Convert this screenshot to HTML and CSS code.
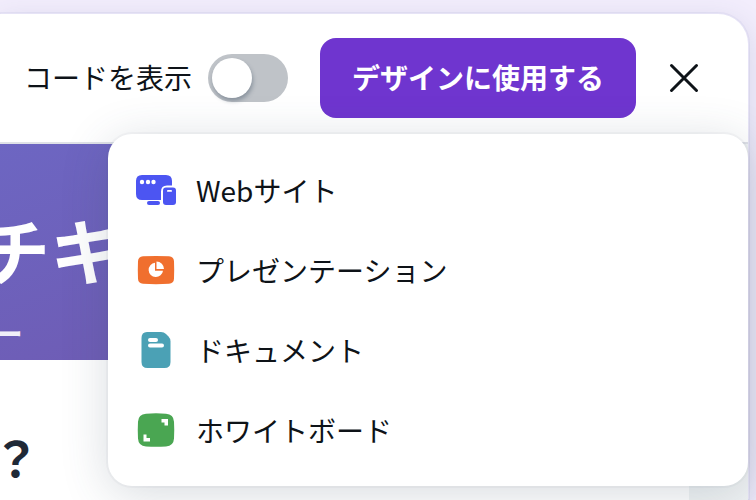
FILE: index.html
```html
<!DOCTYPE html>
<html lang="ja">
<head>
  <meta charset="UTF-8">
  <meta name="viewport" content="width=device-width, initial-scale=1.0">
  <title>デザインに使用する</title>
  <link rel="stylesheet" href="styles.css">
</head>
<body>
  <div class="dialog">
    <header class="toolbar">
      <label class="code-label" for="showCode">コードを表示</label>
      <input class="switch" type="checkbox" role="switch" id="showCode">
      <button class="use-btn" type="button" id="useBtn" aria-expanded="true" aria-controls="useMenu">デザインに使用する</button>
      <button class="close-btn" type="button" aria-label="閉じる">
        <svg width="32" height="32" viewBox="0 0 32 32" fill="none" stroke="currentColor" stroke-width="3" stroke-linecap="round">
          <path d="M3.5 3.5l25 25M28.5 3.5l-25 25"/>
        </svg>
      </button>

      <div class="menu" id="useMenu">
        <button class="menu-item" type="button">
          <svg class="menu-icon" viewBox="0 0 48 48">
            <path fill="#4c55f2" d="M10 9h24q6 0 6 6v4.500h-5q-6 0-6 6V34H10q-6 0-6-6V15q0-6 6-6z"/>
            <rect x="15" y="35" width="13" height="4" rx="2" fill="#4c55f2"/>
            <rect x="31" y="21.500" width="13" height="17.500" rx="3" fill="#4c55f2"/>
            <g fill="#fff">
              <circle cx="10" cy="16" r="2.200"/>
              <circle cx="16" cy="16" r="2.200"/>
              <circle cx="21.500" cy="16" r="2.200"/>
              <rect x="35" y="24" width="5" height="1.800" rx=".9"/>
            </g>
          </svg>
          Webサイト
        </button>
        <button class="menu-item" type="button">
          <svg class="menu-icon" viewBox="0 0 48 48">
            <path fill="#f06f2e" d="M11 10.300q13-.8 26 0 4.800.3 5 5 .4 8.700 0 17.500-.2 4.700-5 5-13 .8-26 0-4.800-.3-5-5-.4-8.800 0-17.500.2-4.700 5-5z"/>
            <path fill="#fff" d="M23 16.700v8h8a7.200 7.200 0 1 1-8-8z"/>
            <path fill="#fff" d="M24.500 15.500a7.500 7.500 0 0 1 7.500 7.500h-7.500z"/>
          </svg>
          プレゼンテーション
        </button>
        <button class="menu-item" type="button">
          <svg class="menu-icon" viewBox="0 0 48 48">
            <path fill="#4ba1b5" d="M15 6h14q3 0 5 2l2.500 2.500q2 2 2 5V36q0 6-6 6h-17q-6 0-6-6V12q0-6 5.500-6z"/>
            <rect x="16" y="12" width="10" height="4" rx="2" fill="#fff"/>
            <rect x="16" y="17.500" width="16" height="4" rx="2" fill="#fff"/>
          </svg>
          ドキュメント
        </button>
        <button class="menu-item" type="button">
          <svg class="menu-icon" viewBox="0 0 48 48">
            <path fill="#4aa652" d="M14 7.700q10-.9 20 0 7.600.4 8 8 .5 8.300 0 16.700-.4 7.400-8 8-10 .8-20 0-7.600-.6-8-8-.5-8.400 0-16.700.4-7.600 8-8z"/>
            <path fill="#fff" d="M29.500 13H36v6.500h-3.500v-3h-3zM11.500 28.500h3v3.500h3.500v3.500h-6.500z"/>
          </svg>
          ホワイトボード
        </button>
      </div>
    </header>

    <main class="preview">
      <article class="page">
        <section class="hero">
          <h1>チキ</h1>
          <p>ー</p>
        </section>
        <h2>？</h2>
      </article>
    </main>
  </div>
</body>
</html>
```

FILE: styles.css
```css
* {
  box-sizing: border-box;
}

body {
  margin: 0;
  min-height: 100vh;
  padding: 12px 6px 0 0;
  display: flex;
  background: #f2edfc;
  color: #0e1318;
  font-family: "Noto Sans CJK JP", sans-serif;
  font-size: 28px;
  line-height: 40px;
  overflow: hidden;
}

button {
  border: none;
  padding: 0;
  background: none;
  color: inherit;
  font: inherit;
  cursor: pointer;
}

.dialog {
  flex: 1;
  min-width: 0;
  display: flex;
  flex-direction: column;
  background: #fff;
  background-clip: padding-box;
  border: 2px solid rgba(57, 76, 148, 0.06);
  border-left: none;
  border-bottom: none;
  border-radius: 0 32px 0 0;
  box-shadow: 0 8px 28px rgba(64, 79, 129, 0.15);
}

.toolbar {
  position: relative;
  display: flex;
  align-items: center;
  justify-content: flex-end;
  padding: 24px 40px 24px 0;
  border-bottom: 2px solid #dfe1e7;
}

.code-label {
  white-space: nowrap;
  margin-right: 16px;
  padding-bottom: 2px;
}

.switch {
  appearance: none;
  flex: none;
  width: 80px;
  height: 48px;
  margin: 0 32px 0 0;
  padding: 4px;
  border-radius: 24px;
  background: #bfc3c8;
  cursor: pointer;
}

.switch::before {
  content: "";
  display: block;
  width: 40px;
  height: 40px;
  border-radius: 50%;
  background: #fff;
  box-shadow: 1px 3px 4px rgba(57, 76, 96, 0.4);
}

.switch:checked {
  background: #6f35cf;
}

.switch:checked::before {
  margin-left: auto;
}

.use-btn {
  height: 80px;
  padding: 0 32px 2px;
  border-radius: 16px;
  background: #6f35cf;
  color: #fff;
  font-weight: 700;
  white-space: nowrap;
}

.close-btn {
  display: flex;
  align-items: center;
  justify-content: center;
  width: 48px;
  height: 48px;
  margin-left: 24px;
}

.menu {
  position: absolute;
  z-index: 1;
  top: 120px;
  right: 0;
  width: 640px;
  max-width: 100%;
  padding: 16px 0;
  border-radius: 24px;
  background: #fff;
  box-shadow: 0 0 0 2px rgba(64, 87, 109, 0.04), 0 8px 48px rgba(57, 76, 96, 0.2);
}

.menu-item {
  display: flex;
  align-items: center;
  gap: 16px;
  width: 100%;
  height: 80px;
  padding: 0 24px;
  line-height: 38px;
  text-align: left;
}

.menu-icon {
  flex: none;
  width: 48px;
  height: 48px;
}

.preview {
  flex: 1;
  display: flex;
  padding-right: 59px;
  background: #f0f3f4;
}

.page {
  flex: 1;
  min-width: 0;
  background: #fff;
}

.hero {
  padding: 60px 0 4px;
  background: linear-gradient(160deg, #6d66c2, #6f55ab);
  color: #fff;
}

.hero h1 {
  margin: 0;
  font-size: 72px;
  line-height: 88px;
  text-indent: -22px;
}

.hero p {
  margin: 16px 0 0;
  font-size: 40px;
  font-weight: 500;
  line-height: 48px;
  text-indent: -16px;
  opacity: 0.9;
}

.page h2 {
  margin: 60px 0 0;
  font-size: 48px;
  line-height: 72px;
  text-indent: -8px;
  color: #1f2937;
}
```
